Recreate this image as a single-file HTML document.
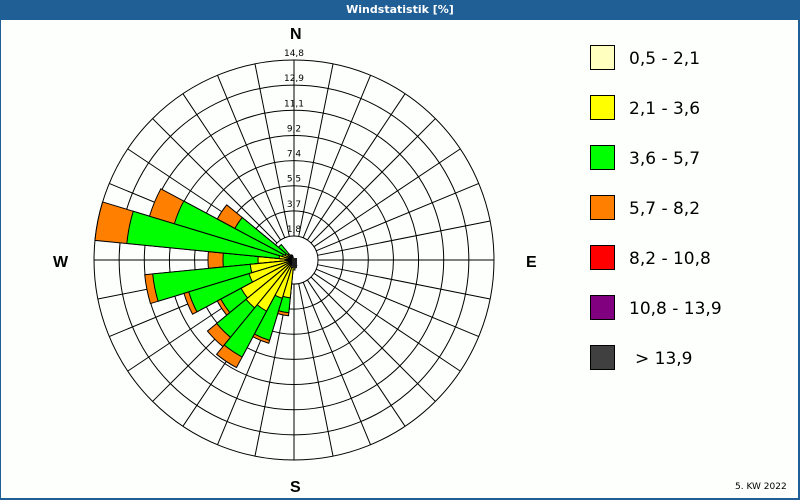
<!DOCTYPE html>
<html><head><meta charset="utf-8"><style>
html,body{margin:0;padding:0;background:#fff;}
#w{position:relative;width:800px;height:500px;overflow:hidden;background:#fdfffd;font-family:"DejaVu Sans","Liberation Sans",sans-serif;}
#t{position:absolute;left:0;top:0;width:800px;height:20px;background:#1f5f96;color:#fff;font-size:11px;font-weight:bold;text-align:center;line-height:19px;}
#bl{position:absolute;left:0;top:20px;width:1px;height:480px;background:#1f5f96}
#br{position:absolute;right:0;top:20px;width:2px;height:480px;background:#1f5f96}
#bb{position:absolute;left:0;bottom:0;width:800px;height:2px;background:#1f5f96}
.lg{position:absolute;left:590px;width:23px;height:23px;border:1px solid #000;}
.lt{position:absolute;left:629px;font-size:17px;color:#000;line-height:20px;}
.d{position:absolute;font-weight:bold;font-size:16px;font-family:"Liberation Sans",sans-serif;color:#000}
</style></head><body><div id="w">
<div id="t">Windstatistik [%]</div>
<svg id="s" width="800" height="500" style="position:absolute;left:0;top:0"></svg>
<div class="d" style="left:290px;top:26px">N</div>
<div class="d" style="left:290px;top:479px">S</div>
<div class="d" style="left:53px;top:254px">W</div>
<div class="d" style="left:526px;top:254px">E</div>
<div class="lg" style="top:45px;background:#ffffc0"></div><div class="lt" style="top:49px">0,5 - 2,1</div>
<div class="lg" style="top:95px;background:#ffff00"></div><div class="lt" style="top:99px">2,1 - 3,6</div>
<div class="lg" style="top:145px;background:#00ff00"></div><div class="lt" style="top:149px">3,6 - 5,7</div>
<div class="lg" style="top:195px;background:#ff8000"></div><div class="lt" style="top:199px">5,7 - 8,2</div>
<div class="lg" style="top:245px;background:#ff0000"></div><div class="lt" style="top:249px">8,2 - 10,8</div>
<div class="lg" style="top:295px;background:#800080"></div><div class="lt" style="top:299px">10,8 - 13,9</div>
<div class="lg" style="top:345px;background:#404040"></div><div class="lt" style="top:349px;left:635px">&gt; 13,9</div>
<div style="position:absolute;left:735px;top:482px;font-size:9px;color:#000">5. KW 2022</div>
<div id="bl"></div><div id="br"></div><div id="bb"></div>
</div>
<script>
var s=document.getElementById('s'),NS='http://www.w3.org/2000/svg',cx=294,cy=260;
function el(n,a){var e=document.createElementNS(NS,n);for(var k in a)e.setAttribute(k,a[k]);s.appendChild(e);return e;}
function P(r,d){var a=d*Math.PI/180;return [cx+r*Math.sin(a),cy-r*Math.cos(a)];}
for(var k=7;k>=0;k--){el('circle',{cx:cx,cy:cy,r:24+25.14*k,fill:k==0?'#fff':'none',stroke:'#000','stroke-width':1});}
for(var i=0;i<32;i++){var a=i*11.25,p=P(24,a),q=P(200,a);el('line',{x1:p[0],y1:p[1],x2:q[0],y2:q[1],stroke:'#000','stroke-width':1});}
var data=[[270,36,71,86],[281.25,15,168,200],[292.5,12,125,151],[303.75,10,67,87],[315,8,20,0],[258.75,44,142,150],[247.5,47,110,115],[236.25,60,83,87],[225,62,100,112],[213.75,58,110,122],[202.5,40,84,87],[191.25,38,53,56],[326.25,6,0,0],[180,10,0,0],[168.75,8,0,0],[157.5,6,0,0],[337.5,5,0,0]];
var cols=['#ff8000','#00ff00','#ffff00'];
function wedge(d,r,c){var p=P(r,d-5.625),q=P(r,d+5.625);el('path',{d:'M'+cx+' '+cy+'L'+p[0]+' '+p[1]+'A'+r+' '+r+' 0 0 1 '+q[0]+' '+q[1]+'Z',fill:c,stroke:'#000','stroke-width':1});}
data.forEach(function(b){if(b[3])wedge(b[0],b[3],cols[0]);if(b[2])wedge(b[0],b[2],cols[1]);wedge(b[0],b[1],cols[2]);});
el('rect',{x:292,y:258,width:5,height:10,fill:'#202020'});
var L=['1,8','3,7','5,5','7,4','9,2','11,1','12,9','14,8'];
for(var k=0;k<8;k++){var t=el('text',{x:cx,y:cy-24-25.14*k-4,'text-anchor':'middle','font-size':'9','font-family':'DejaVu Sans, sans-serif',fill:'#000'});t.textContent=L[k];}
</script>
</body></html>
